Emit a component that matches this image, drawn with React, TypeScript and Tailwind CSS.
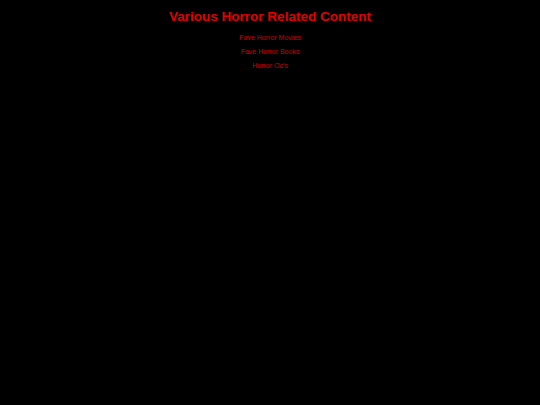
export default function App() {
  const links = ['Fave Horror Movies', 'Fave Horror Books', "Horror Oc's"]
  return (
    <div className="min-h-[405px] bg-black text-center font-['Liberation_Sans',Arial,sans-serif]">
      <h1 className="pt-[9px] text-[13.5px] font-bold leading-[16px] text-[#e00000]">
        Various Horror Related Content
      </h1>
      <ul className="mt-[9px] flex flex-col gap-[6px]">
        {links.map((l) => (
          <li key={l} className="text-[7px] leading-[8px] text-[#c80000]">
            <a href="#">{l}</a>
          </li>
        ))}
      </ul>
    </div>
  )
}
